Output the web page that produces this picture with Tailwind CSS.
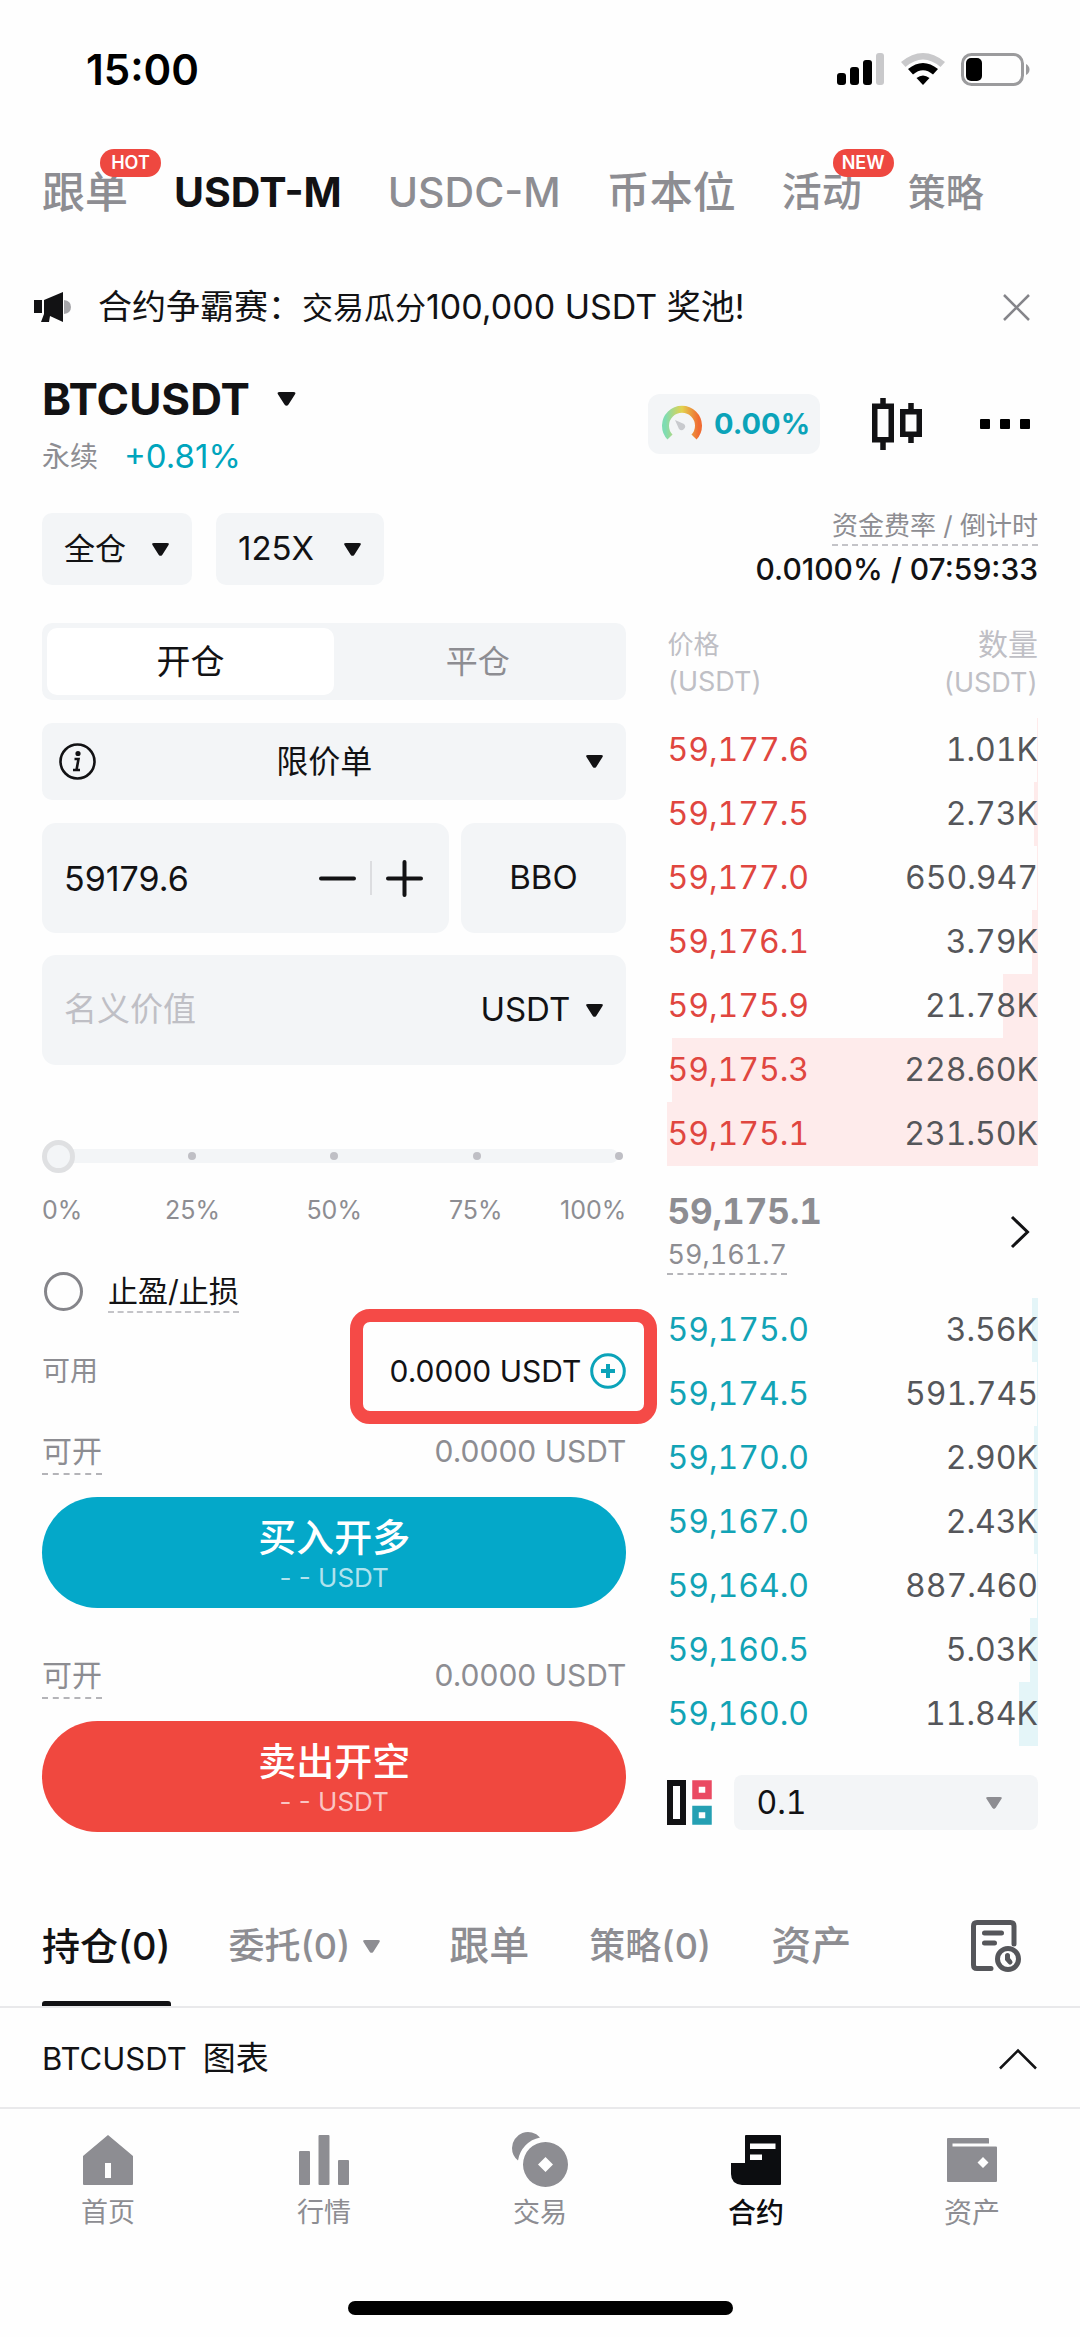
<!DOCTYPE html>
<html lang="zh-CN">
<head>
<meta charset="utf-8">
<meta name="viewport" content="width=device-width, initial-scale=1">
<title>BTCUSDT 合约</title>
<script src="https://cdn.jsdelivr.net/npm/@tailwindcss/browser@4"></script>
</head>
<body class="min-h-screen bg-[#fefefe] font-['Inter','Noto_Sans_CJK_SC',sans-serif] text-[#121214]">
<svg class="hidden">
  <symbol id="caret" viewBox="0 0 20 16"><path d="M3 1h14q3 0 1.400 2.500L12 13.500q-2 2.500-4 0L1.600 3.500Q0 1 3 1Z" fill="currentColor"/></symbol>
</svg>

<!-- Status bar -->
<div class="flex h-[138px] items-center justify-between pr-[50px] pl-[86px]">
  <span class="text-[42px] font-semibold text-black">15:00</span>
  <div class="flex items-center gap-[16px]">
    <svg class="h-[32px] w-[48px]" viewBox="0 0 48 32"><rect x="0" y="20" width="9" height="12" rx="3"/><rect x="13" y="14" width="9" height="18" rx="3"/><rect x="26" y="7" width="9" height="25" rx="3"/><rect x="39" y="0" width="8" height="32" rx="3" fill="#c9c9cb"/></svg>
    <svg class="h-[32px] w-[44px]" viewBox="0 0 44 32"><path d="M0 9Q22-9 44 9L39.500 14Q22-1 4.500 14Z" fill="#c9c9cb"/><path d="M7 16Q22 4 37 16L32 21.500Q22 13 12 21.500Z"/><path d="M15.500 25Q22 20 28.500 25L22 32Z"/></svg>
    <svg class="h-[33px] w-[69px]" viewBox="0 0 69 33"><rect x="1.500" y="1.500" width="60" height="30" rx="9" fill="none" stroke="#9b9b9d" stroke-width="3"/><rect x="5" y="5" width="16" height="23" rx="5"/><path d="M65 11q3.500 2 3.500 5.500T65 22Z" fill="#9b9b9d"/></svg>
  </div>
</div>

<!-- Market tabs -->
<nav class="flex h-[108px] items-center gap-[46px] pl-[42px] text-[41px] leading-[60px] font-medium whitespace-nowrap text-[#8d8d92]">
  <a href="#" class="relative text-[43px]">跟单<span class="absolute -top-[13px] left-[58px] z-10 flex h-[28px] w-[61px] items-center justify-center rounded-full bg-[#ee4840] text-[18px] font-semibold text-white">HOT</span></a>
  <a href="#" aria-current="page" class="font-bold text-[#121214]">USDT-M</a>
  <a href="#">USDC-M</a>
  <a href="#" class="text-[43px]">币本位</a>
  <a href="#" class="relative text-[40px]">活动<span class="absolute -top-[13px] left-[51px] z-10 flex h-[28px] w-[61px] items-center justify-center rounded-full bg-[#ee4840] text-[18px] font-semibold text-white">NEW</span></a>
  <a href="#" class="text-[38px]">策略</a>
</nav>

<!-- Announcement -->
<div class="flex h-[122px] items-center pr-[50px] pl-[34px]">
  <svg class="h-[31px] w-[38px]" viewBox="0 0 38 31"><path d="M30 8q7 1 7 7t-7 7Z" fill="#a5a5a9"/><path d="M0 8h8v13H0ZM10 8 29 0v30L16 24l-1 6-8 0 3-8Z" fill="#121214"/></svg>
  <p class="ml-[26px] flex-1 text-[34px] leading-[48px] whitespace-nowrap">合约争霸赛：<span class="text-[31px]">交易瓜分</span>100,000 USDT 奖池!</p>
  <button aria-label="关闭"><svg class="h-[27px] w-[27px]" viewBox="0 0 27 27"><path d="M1 1 26 26M26 1 1 26" stroke="#85858a" stroke-width="2.500"/></svg></button>
</div>

<!-- Trading pair -->
<section class="flex items-center justify-between pr-[50px] pl-[42px]">
  <div>
    <button class="flex h-[62px] items-center gap-[26px] text-[44px] font-bold">BTCUSDT <svg class="h-[16px] w-[21px]"><use href="#caret"/></svg></button>
    <p class="flex h-[54px] items-center gap-[26px] text-[33px] text-[#00a5bd]"><span class="text-[28px] text-[#8d8d92]">永续</span>+0.81%</p>
  </div>
  <div class="flex items-center pb-[4px]">
    <button class="flex h-[60px] w-[172px] items-center gap-[12px] rounded-[12px] bg-[#f3f5f7] pl-[14px] text-[29px] font-bold text-[#0ba3b9]">
      <svg class="h-[40px] w-[40px] shrink-0" viewBox="0 0 40 40">
        <defs><linearGradient id="g"><stop offset="0" stop-color="#7fdcb2"/><stop offset=".5" stop-color="#e3d24e"/><stop offset="1" stop-color="#f06c33"/></linearGradient></defs>
        <path d="M8 33A16.500 16.500 0 1 1 32 33" fill="none" stroke="url(#g)" stroke-width="7"/><path d="M13 16 22 20a3.500 3.500 0 1 1-5 5Z" fill="#c8cace"/>
      </svg>0.00%</button>
    <button aria-label="图表" class="ml-[52px]"><svg class="h-[52px] w-[50px]" viewBox="0 0 50 52" fill="none" stroke="#121214" stroke-width="5.500"><path d="M2.750 8.250h16.500v33.500H2.750ZM11 0v8M11 42v10M30.750 13.750h16.500v22.500h-16.500ZM39 5v8M39 37v8"/></svg></button>
    <button aria-label="更多" class="ml-[58px]"><svg class="h-[10px] w-[50px]" viewBox="0 0 50 10"><rect width="10" height="10" rx="1"/><rect x="20" width="10" height="10" rx="1"/><rect x="40" width="10" height="10" rx="1"/></svg></button>
  </div>
</section>

<!-- Margin mode, leverage, funding -->
<section class="mt-[22px] flex items-center justify-between px-[42px]">
  <div class="flex gap-[24px]">
    <label class="relative text-[31px]"><select aria-label="保证金模式" class="h-[72px] w-[150px] appearance-none rounded-[10px] bg-[#f3f5f7] pl-[22px]"><option>全仓</option></select><svg class="pointer-events-none absolute top-[29px] right-[22px] h-[15px] w-[19px]"><use href="#caret"/></svg></label>
    <label class="relative text-[33px]"><select aria-label="杠杆" class="h-[72px] w-[168px] appearance-none rounded-[10px] bg-[#f3f5f7] pl-[22px]"><option>125X</option></select><svg class="pointer-events-none absolute top-[29px] right-[22px] h-[15px] w-[19px]"><use href="#caret"/></svg></label>
  </div>
  <div class="flex flex-col items-end">
    <p class="h-[40px] border-b-2 border-dashed border-[#c4c4c8] text-[26px] leading-[40px] text-[#8d8d92]">资金费率 / 倒计时</p>
    <p class="text-[30px] leading-[46px] font-medium">0.0100% / 07:59:33</p>
  </div>
</section>

<main class="mt-[31px] grid grid-cols-[585fr_371fr] gap-x-[41px] px-[42px]">
  <!-- Order form -->
  <form class="min-w-0">
    <div class="flex h-[77px] rounded-[10px] bg-[#f3f5f7] p-[5px] text-[34px]">
      <button type="button" class="flex-1 rounded-[10px] bg-white">开仓</button>
      <button type="button" class="flex-1 text-[32px] text-[#8d8d92]">平仓</button>
    </div>

    <label class="relative mt-[23px] block text-[32px]">
      <svg class="pointer-events-none absolute top-[20px] left-[17px] h-[37px] w-[37px]" viewBox="0 0 37 37" fill="none" stroke="#121214" stroke-width="2.600"><circle cx="18.500" cy="18.500" r="17"/><path d="M15.500 16h4l-2 11m-3.500 0h7"/><circle cx="19" cy="10.500" r="1.300" fill="#121214"/></svg>
      <select aria-label="订单类型" class="h-[77px] w-full appearance-none rounded-[10px] bg-[#f3f5f7] pr-[20px] text-center [text-align-last:center]"><option>限价单</option></select>
      <svg class="pointer-events-none absolute top-[31px] right-[22px] h-[15px] w-[19px]"><use href="#caret"/></svg>
    </label>

    <div class="mt-[23px] grid h-[110px] grid-cols-[407fr_166fr] gap-[12px] text-[32px]">
      <div class="flex min-w-0 items-center rounded-[14px] bg-[#f3f5f7] pr-[26px] pl-[22px]">
        <input aria-label="价格" value="59179.6" class="w-0 min-w-0 flex-1 bg-transparent text-[34px] outline-none">
        <button type="button" aria-label="减少"><svg class="h-[37px] w-[37px]" viewBox="0 0 37 37"><path d="M2 18.500h33" stroke="#121214" stroke-width="4" stroke-linecap="round"/></svg></button>
        <span class="mx-[14px] h-[34px] w-[2px] bg-[#dcdde0]"></span>
        <button type="button" aria-label="增加"><svg class="h-[37px] w-[37px]" viewBox="0 0 37 37"><path d="M2 18.500h33M18.500 2v33" stroke="#121214" stroke-width="4" stroke-linecap="round"/></svg></button>
      </div>
      <button type="button" class="rounded-[14px] bg-[#f3f5f7] text-[33px]">BBO</button>
    </div>

    <div class="mt-[22px] flex h-[110px] items-center rounded-[14px] bg-[#f3f5f7] pr-[22px] pl-[22px] text-[33px]">
      <input aria-label="名义价值" placeholder="名义价值" class="w-0 min-w-0 flex-1 bg-transparent outline-none placeholder:text-[#bfbfc5]">
      <label class="relative"><select aria-label="单位" class="w-[124px] appearance-none"><option>USDT</option></select><svg class="pointer-events-none absolute top-[18px] right-0 h-[15px] w-[19px]"><use href="#caret"/></svg></label>
    </div>

    <div class="relative mt-[75px] h-[33px]">
      <div class="absolute inset-x-[8px] top-[9px] h-[14px] rounded-full bg-[#f3f5f7]"></div>
      <div class="absolute inset-x-[3px] top-[12px] flex justify-between">
        <i class="size-[8px]"></i><i class="size-[8px] rounded-full bg-[#bfbfc5]"></i><i class="size-[8px] rounded-full bg-[#bfbfc5]"></i><i class="size-[8px] rounded-full bg-[#bfbfc5]"></i><i class="size-[8px] rounded-full bg-[#bfbfc5]"></i>
      </div>
      <input type="range" aria-label="仓位比例" min="0" max="100" step="25" value="0" class="relative block h-[33px] w-full appearance-none bg-transparent [&::-webkit-slider-thumb]:size-[33px] [&::-webkit-slider-thumb]:appearance-none [&::-webkit-slider-thumb]:rounded-full [&::-webkit-slider-thumb]:border-[5px] [&::-webkit-slider-thumb]:border-solid [&::-webkit-slider-thumb]:border-[#dfe0e2] [&::-webkit-slider-thumb]:bg-[#f3f5f7]">
    </div>
    <div class="mt-[19px] grid grid-cols-[80fr_141fr_142fr_141fr_80fr] text-center text-[25px] leading-[36px] text-[#8d8d92]">
      <span class="text-left">0%</span><span>25%</span><span>50%</span><span>75%</span><span class="text-right">100%</span>
    </div>

    <label class="mt-[41px] flex h-[44px] items-center gap-[25px] pl-[2px] text-[30px]">
      <input type="checkbox" class="size-[39px] appearance-none rounded-full border-[3px] border-[#85858a]">
      <span class="h-[44px] border-b-2 border-dashed border-[#c4c4c8] leading-[44px]">止盈/止损</span>
    </label>

    <div class="mt-[36px] flex h-[44px] items-center justify-between text-[28px] text-[#8d8d92]">
      <span>可用</span>
      <button type="button" class="relative flex items-center gap-[9px] text-[30px] leading-[44px] text-[#121214]">0.0000 USDT
        <svg class="h-[36px] w-[36px]" viewBox="0 0 36 36" fill="none" stroke="#0ba3b9" stroke-width="3"><circle cx="18" cy="18" r="16.300"/><path d="M11 18h14M18 11v14" stroke-width="4"/></svg>
        <span class="pointer-events-none absolute -top-[40px] -right-[31px] -bottom-[31px] -left-[39px] z-10 rounded-[20px] border-[13px] border-[#f54a47]"></span>
      </button>
    </div>

    <div class="mt-[35px] flex h-[47px] items-center justify-between text-[30px] text-[#8d8d92]">
      <span class="h-[47px] border-b-2 border-dashed border-[#b4b4b8] leading-[47px]">可开</span><span>0.0000 USDT</span>
    </div>
    <button type="button" class="mt-[22px] block h-[111px] w-full rounded-full bg-[#04a8c9] pt-[6px] text-white"><span class="block text-[38px] leading-[44px] font-medium">买入开多</span><span class="block text-[26px] leading-[38px] text-white/70">- - USDT</span></button>

    <div class="mt-[44px] flex h-[47px] items-center justify-between text-[30px] text-[#8d8d92]">
      <span class="h-[47px] border-b-2 border-dashed border-[#b4b4b8] leading-[47px]">可开</span><span>0.0000 USDT</span>
    </div>
    <button type="button" class="mt-[22px] block h-[111px] w-full rounded-full bg-[#f0483f] pt-[6px] text-white"><span class="block text-[38px] leading-[44px] font-medium">卖出开空</span><span class="block text-[26px] leading-[38px] text-white/70">- - USDT</span></button>
  </form>

  <!-- Order book -->
  <section class="min-w-0">
    <table class="isolate w-full text-[32px] text-[#55565a] tabular-nums">
      <thead class="text-[27px] leading-[37px] text-[#bfbfc5]">
        <tr class="h-[95px]"><th class="pt-[3px] text-left align-top font-normal"><span class="text-[26px]">价格</span><br>(USDT)</th><th class="pt-[3px] text-right align-top font-normal"><span class="text-[30px]">数量</span><br>(USDT)</th></tr>
      </thead>
      <tbody>
        <tr class="relative h-[64px]"><td class="text-[#e0463f]">59,177.6</td><td class="text-right">1.01K<i class="absolute inset-y-0 right-0 -z-10 bg-[#feebeb]" style="width:.4%"></i></td></tr>
        <tr class="relative h-[64px]"><td class="text-[#e0463f]">59,177.5</td><td class="text-right">2.73K<i class="absolute inset-y-0 right-0 -z-10 bg-[#feebeb]" style="width:1.1%"></i></td></tr>
        <tr class="relative h-[64px]"><td class="text-[#e0463f]">59,177.0</td><td class="text-right">650.947<i class="absolute inset-y-0 right-0 -z-10 bg-[#feebeb]" style="width:.3%"></i></td></tr>
        <tr class="relative h-[64px]"><td class="text-[#e0463f]">59,176.1</td><td class="text-right">3.79K<i class="absolute inset-y-0 right-0 -z-10 bg-[#feebeb]" style="width:1.6%"></i></td></tr>
        <tr class="relative h-[64px]"><td class="text-[#e0463f]">59,175.9</td><td class="text-right">21.78K<i class="absolute inset-y-0 right-0 -z-10 bg-[#feebeb]" style="width:9.4%"></i></td></tr>
        <tr class="relative h-[64px]"><td class="text-[#e0463f]">59,175.3</td><td class="text-right">228.60K<i class="absolute inset-y-0 right-0 -z-10 bg-[#feebeb]" style="width:98.7%"></i></td></tr>
        <tr class="relative h-[64px]"><td class="text-[#e0463f]">59,175.1</td><td class="text-right">231.50K<i class="absolute inset-y-0 right-0 -z-10 bg-[#feebeb]" style="width:100%"></i></td></tr>
      </tbody>
      <tbody>
        <tr class="h-[132px]"><td colspan="2">
          <div class="flex items-center justify-between pr-[8px] text-[#8d8d92]">
            <div class="flex flex-col items-start"><strong class="text-[35px] leading-[44px] font-bold">59,175.1</strong><span class="h-[42px] border-b-2 border-dashed border-[#b4b4b8] text-[27px] leading-[44px]">59,161.7</span></div>
            <button aria-label="更多深度"><svg class="h-[34px] w-[20px]" viewBox="0 0 20 34"><path d="M2 2 17.500 17 2 32" fill="none" stroke="#121214" stroke-width="3"/></svg></button>
          </div></td></tr>
      </tbody>
      <tbody>
        <tr class="relative h-[64px]"><td class="text-[#12a3b5]">59,175.0</td><td class="text-right">3.56K<i class="absolute inset-y-0 right-0 -z-10 bg-[#e4f5f8]" style="width:1.5%"></i></td></tr>
        <tr class="relative h-[64px]"><td class="text-[#12a3b5]">59,174.5</td><td class="text-right">591.745<i class="absolute inset-y-0 right-0 -z-10 bg-[#e4f5f8]" style="width:.3%"></i></td></tr>
        <tr class="relative h-[64px]"><td class="text-[#12a3b5]">59,170.0</td><td class="text-right">2.90K<i class="absolute inset-y-0 right-0 -z-10 bg-[#e4f5f8]" style="width:1.2%"></i></td></tr>
        <tr class="relative h-[64px]"><td class="text-[#12a3b5]">59,167.0</td><td class="text-right">2.43K<i class="absolute inset-y-0 right-0 -z-10 bg-[#e4f5f8]" style="width:1%"></i></td></tr>
        <tr class="relative h-[64px]"><td class="text-[#12a3b5]">59,164.0</td><td class="text-right">887.460<i class="absolute inset-y-0 right-0 -z-10 bg-[#e4f5f8]" style="width:.4%"></i></td></tr>
        <tr class="relative h-[64px]"><td class="text-[#12a3b5]">59,160.5</td><td class="text-right">5.03K<i class="absolute inset-y-0 right-0 -z-10 bg-[#e4f5f8]" style="width:2.1%"></i></td></tr>
        <tr class="relative h-[64px]"><td class="text-[#12a3b5]">59,160.0</td><td class="text-right">11.84K<i class="absolute inset-y-0 right-0 -z-10 bg-[#e4f5f8]" style="width:5%"></i></td></tr>
      </tbody>
    </table>
    <div class="mt-[29px] flex h-[55px] items-center gap-[22px]">
      <button aria-label="盘口布局"><svg class="h-[45px] w-[45px]" viewBox="0 0 45 45" fill="none"><path d="M3 3h13v39H3Z" stroke="#121214" stroke-width="6"/><path d="M28.500 3.500h13v12.500h-13Z" stroke="#ea4a62" stroke-width="6.500"/><path d="M28.500 29h13v12.500h-13Z" stroke="#25a0b3" stroke-width="6.500"/></svg></button>
      <label class="relative flex-1 text-[32px]"><select aria-label="价格精度" class="h-[55px] w-full appearance-none rounded-[8px] bg-[#f3f5f7] pl-[22px] tabular-nums"><option>0.1</option></select><svg class="pointer-events-none absolute top-[21px] right-[35px] h-[14px] w-[18px] text-[#8d8d92]"><use href="#caret"/></svg></label>
    </div>
  </section>
</main>

<!-- Position tabs -->
<nav class="mt-[54px] flex h-[122px] items-center border-b-2 border-[#e9e9eb] pr-[59px] pl-[42px] text-[38px] leading-[56px] font-medium whitespace-nowrap text-[#8d8d92]">
  <a href="#" aria-current="page" class="relative flex h-[120px] items-center text-[#121214]">持仓(0)<span class="absolute inset-x-0 bottom-0 h-[5px] rounded-t-[3px] bg-[#121214]"></span></a>
  <a href="#" class="ml-[58px] flex items-center gap-[12px] text-[36px]">委托(0) <svg class="h-[15px] w-[19px]"><use href="#caret"/></svg></a>
  <a href="#" class="ml-[68px] text-[40px]">跟单</a>
  <a href="#" class="ml-[60px] text-[36px]">策略(0)</a>
  <a href="#" class="ml-[60px] text-[40px]">资产</a>
  <button aria-label="历史记录" class="ml-auto"><svg class="h-[52px] w-[50px]" viewBox="0 0 50 52" fill="none" stroke="#55565a" stroke-width="5" stroke-linecap="round"><path d="M43 24V6q0-3.500-3.500-3.500H6Q2.500 2.500 2.500 6v39q0 3.500 3.500 3.500h14M13.500 13h17M13.500 23h10"/><circle cx="37" cy="39" r="10.500"/><path d="M36.500 35.500v3.500l2.500 3"/></svg></button>
</nav>

<button class="flex h-[101px] w-full items-center justify-between border-b-2 border-[#e9e9eb] px-[42px] pt-[3px] text-[31px]"><span class="flex items-center gap-[16px]">BTCUSDT <span class="text-[33px]">图表</span></span><svg class="h-[22px] w-[40px]" viewBox="0 0 40 22"><path d="M2 20.500 20 2.500 38 20.500" fill="none" stroke="#121214" stroke-width="2.500"/></svg></button>

<!-- Bottom navigation -->
<nav class="grid grid-cols-5 pt-[22px] text-center text-[28px] leading-[40px] text-[#8d8d92]">
  <a href="#" class="flex flex-col items-center gap-[6px]"><svg class="h-[56px] w-[50px]" viewBox="0 0 50 56" fill="currentColor"><path fill-rule="evenodd" d="M25 4 50 25v28q0 1-1 1H1q-1 0-1-1V25ZM22 32v15h6V32Z"/></svg><span class="text-[27px]">首页</span></a>
  <a href="#" class="flex flex-col items-center gap-[6px]"><svg class="h-[56px] w-[50px]" viewBox="0 0 50 56" fill="currentColor"><rect y="20" width="11" height="34" rx="1"/><rect x="19.500" y="4" width="11" height="50" rx="1"/><rect x="39" y="29" width="11" height="25" rx="1"/></svg><span class="text-[27px]">行情</span></a>
  <a href="#" class="flex flex-col items-center gap-[6px]"><svg class="h-[56px] w-[56px]" viewBox="0 0 56 56" fill="currentColor"><path d="M28 6.500A16 16 0 0 0 0 17A16 16 0 0 0 6 29.500A27.700 27.700 0 0 1 28 6.500Z"/><path fill-rule="evenodd" d="M33.500 11a22.500 22.500 0 1 1 0 45 22.500 22.500 0 0 1 0-45Zm0 15-7.500 7.500 7.500 7.500 7.500-7.500Z"/></svg><span class="text-[27px]">交易</span></a>
  <a href="#" aria-current="page" class="flex flex-col items-center gap-[6px] font-medium text-[#0c0d10]"><svg class="h-[56px] w-[50px]" viewBox="0 0 50 56" fill="currentColor"><path fill-rule="evenodd" d="M14 5q0-1 1-1h34q1 0 1 1v48q0 1-1 1H11Q0 53 0 43V32h14ZM19 12.500v5.500h25.500v-5.500ZM19 23.500v5.500h12v-5.500Z"/></svg>合约</a>
  <a href="#" class="flex flex-col items-center gap-[6px]"><svg class="h-[56px] w-[50px]" viewBox="0 0 50 56" fill="currentColor"><path fill-rule="evenodd" d="M1 7h40q1 0 1 1v4.500H5.500v3H49q1 0 1 1V50q0 1-1 1H1q-1 0-1-1V8q0-1 1-1ZM36 26l-5.500 5.500L36 37l5.500-5.500Z"/></svg>资产</a>
</nav>
<div class="mx-auto mt-[68px] mb-[22px] h-[14px] w-[385px] rounded-full bg-black"></div>
</body>
</html>
